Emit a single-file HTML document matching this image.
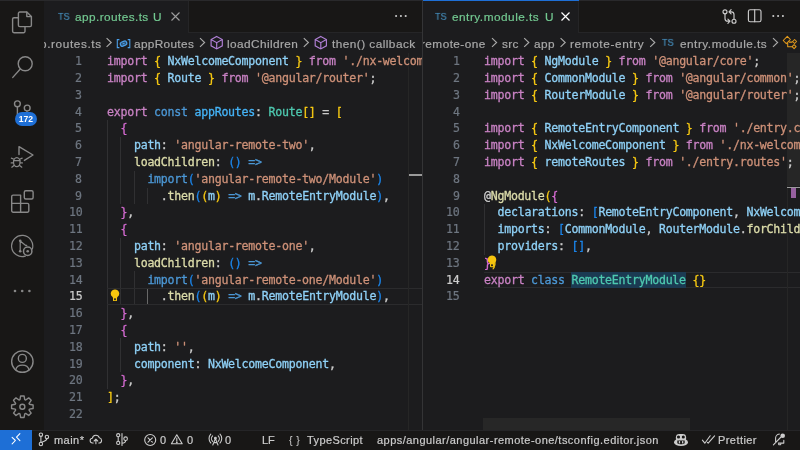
<!DOCTYPE html>
<html><head><meta charset="utf-8"><title>app.routes.ts</title>
<style>
*{box-sizing:border-box;margin:0;padding:0}
html,body{width:800px;height:450px;overflow:hidden;background:#1c1c1e}
body{position:relative;font-family:"Liberation Sans",sans-serif;color:#ccc;-webkit-font-smoothing:antialiased}
.abs{position:absolute}
#act{left:0;top:0;width:44px;height:430px;background:#181716}
#act svg{position:absolute;overflow:visible}
.grp{position:absolute;top:0;height:430px;overflow:hidden;background:#1c1c1e}
.tx,.no,.tab span,.bc span,#status span{will-change:transform}
#g1{left:44px;width:378px}
#g2{left:423px;width:377px}
#sep{left:422px;top:0;width:1px;height:430px;background:#343436}
.tabs{position:absolute;left:0;top:0;right:0;height:33px;background:#181716;border-bottom:1px solid #252527}
.tab{position:absolute;left:0;top:0;height:33px;background:#1c1c1e;border-right:1px solid #252527}
.tab span{position:absolute;white-space:nowrap}
.tl{top:8.75px;font-size:11.8px;line-height:16px;color:#73c991;-webkit-text-stroke:.2px}
.ts{position:absolute;font-size:10.2px;transform:scale(.885,.86);transform-origin:0 0;line-height:12px;color:#4792c2;-webkit-text-stroke:.15px}
.bc{position:absolute;left:0;right:0;top:33px;height:20px;white-space:nowrap;font-size:11.8px;color:#a9a9a9}
.bc span,.bc svg{position:absolute}
.bc span{top:2.6px;line-height:16px;-webkit-text-stroke:.2px}
.bc span.ts{line-height:12px}
.code{position:absolute;left:0;right:0;top:53.2px;bottom:0;font-family:"DejaVu Sans Mono","Liberation Mono",monospace;font-size:11.6px;letter-spacing:-.253px}
.ln{position:relative;height:16.81px;line-height:16.81px}
.no{position:absolute;right:calc(100% - var(--nr));top:0;color:#6e7681;-webkit-text-stroke:.2px}
.act .no{color:#ccc}
.tx{position:absolute;left:var(--cx);top:0;white-space:pre;-webkit-text-stroke:.3px}
.k{color:#c982c4}.b{color:#4c98d6}.v{color:#8fd1f7}.s{color:#ce9178}.f{color:#dcdcaa}.t{color:#4ec9b0}.c{color:#45b4f8}.p{color:#cccccc}
.g1{color:#f7c912}.g2{color:#d56bd2}.g3{color:#1b86ec}
.sel{color:#4ec9b0}
.guide{position:absolute;width:1px;background:#303032}
.ga{background:#686868;width:1.2px}
.clb{position:absolute;height:1px;background:#2b2b2d}
#status{left:0;top:430px;width:800px;height:20px;background:#181716;border-top:1px solid #252527;font-size:11px;color:#ccc}
#status span,#status svg{position:absolute;white-space:nowrap}
#status span{top:.7px;line-height:16px;-webkit-text-stroke:.2px}
#remote{left:0;top:430px;width:32px;height:20px;background:#1e6fd6}
</style></head><body>

<div id="act" class="abs"></div>
<svg class="abs" style="left:0;top:0" width="44" height="430" viewBox="0 0 44 430" fill="none" stroke="#888888" stroke-width="1.4" stroke-linejoin="round" stroke-linecap="round">
<!-- files -->
<path d="M18.400 25.200V13.400a1.400 1.400 0 0 1 1.400-1.400h7l4.600 4.600v8.600a1.400 1.400 0 0 1-1.400 1.400H19.800a1.400 1.400 0 0 1-1.400-1.400z"/>
<path d="M26.800 12.200v4.400h4.400"/>
<path d="M18.200 17.700h-4.200a1.400 1.400 0 0 0-1.400 1.400v12.200a1.400 1.400 0 0 0 1.400 1.400h9.600a1.400 1.400 0 0 0 1.400-1.400v-4.500"/>
<!-- search -->
<circle cx="25.2" cy="63.8" r="7"/>
<path d="M20.3 69L12.8 77.4"/>
<!-- scm -->
<circle cx="17.4" cy="103.8" r="2.9"/>
<circle cx="27.2" cy="108" r="2.9"/>
<path d="M17.4 107v14M27 111.4c0 4-4 5-9.6 6.5"/>
<!-- debug -->
<path d="M19 154.600V146.600L33 155 24.400 160.400"/>
<g stroke-width="1.250"><ellipse cx="16.800" cy="162.100" rx="3.300" ry="4.500"/>
<path d="M13.700 160.600h6.200M13.400 159l-2-.8M20.200 159l2-.8M13.400 162.900h-2.200M20.200 162.900h2.200M14 165.400l-2.200 1.800M19.600 165.400l2.200 1.800"/></g>
<!-- extensions -->
<path d="M20.600 195.100h-7.500a1.400 1.400 0 0 0-1.400 1.400v14.300a1.400 1.400 0 0 0 1.400 1.400h14.300a1.400 1.400 0 0 0 1.400-1.400v-6a1.400 1.400 0 0 0-1.400-1.400h-6.800zM11.700 203.400h8.900M20.600 203.400v8.800"/>
<rect x="24.300" y="190.700" width="8.800" height="8.300" rx="1.500"/>
<!-- gitlens inspect -->
<g stroke-width="1.2"><path d="M25.300 256.150A10.600 10.600 0 1 1 32.350 249"/>
<circle cx="27.700" cy="251.300" r="4.200" stroke-width="1.500"/>
<circle cx="27.700" cy="251.300" r="1.300" fill="#888888" stroke="none"/>
<path d="M20.200 241v10M20.200 241l5.200 4.300h1.400"/>
<circle cx="20.200" cy="240.700" r="1.300" fill="#888888" stroke="none"/><circle cx="20.200" cy="251.300" r="1.300" fill="#888888" stroke="none"/></g>
<!-- more -->
<g fill="#868686" stroke="none"><circle cx="15" cy="291" r="1.3"/><circle cx="22.2" cy="291" r="1.3"/><circle cx="29.4" cy="291" r="1.3"/></g>
<!-- account -->
<circle cx="22.35" cy="361.6" r="10.7"/>
<circle cx="22.35" cy="358.4" r="4"/>
<path d="M15.7 369.800c.8-3.400 3.300-4.700 6.650-4.700s5.850 1.300 6.650 4.700"/>
<!-- gear -->
<path d="M19.96 399.59 L20.61 395.94 L24.09 395.94 L24.74 399.59 L25.69 399.98 L28.72 397.86 L31.19 400.33 L29.07 403.36 L29.46 404.31 L33.11 404.96 L33.11 408.44 L29.46 409.09 L29.07 410.04 L31.19 413.07 L28.72 415.54 L25.69 413.42 L24.74 413.81 L24.09 417.46 L20.61 417.46 L19.96 413.81 L19.01 413.42 L15.98 415.54 L13.51 413.07 L15.63 410.04 L15.24 409.09 L11.59 408.44 L11.59 404.96 L15.24 404.31 L15.63 403.36 L13.51 400.33 L15.98 397.86 L19.01 399.98Z"/>
<circle cx="22.35" cy="406.7" r="2.5"/>
</svg>
<div class="abs" style="left:14.7px;top:111.7px;width:22.5px;height:14.8px;border-radius:7.4px;background:#1e6fd6;color:#fff;font-size:8.6px;font-weight:bold;line-height:14.8px;text-align:center;letter-spacing:0;text-indent:-.6px"><span style="will-change:transform;display:block">172</span></div>

<div id="g1" class="grp" style="--nr:38px;--cx:63px">
  <div class="tabs">
    <div class="tab" style="width:145px">
      <span class="ts" style="left:13.6px;top:11.6px">TS</span>
      <span class="tl" style="left:30.6px;letter-spacing:.42px">app.routes.ts</span>
      <span class="tl" style="left:109.4px">U</span>
      <svg class="abs" style="left:126.5px;top:11.5px" width="9" height="9" viewBox="0.5 0.5 9 9" stroke="#9d9d9d" stroke-width="1.1" fill="none"><path d="M1 1l8 8M9 1l-8 8"/></svg>
    </div>
    <svg class="abs" style="left:348.6px;top:13px" width="16" height="6" viewBox="0 0 16 6" fill="#ccc"><circle cx="3.100" cy="3" r="1.050"/><circle cx="7.900" cy="3" r="1.050"/><circle cx="12.700" cy="3" r="1.050"/></svg>
  </div>
  <div class="bc">
    <span style="left:-4.5px;letter-spacing:.6px">p.routes.ts</span>
    <span style="left:90px;letter-spacing:.34px">appRoutes</span>
    <span style="left:183.2px;letter-spacing:.42px">loadChildren</span>
    <span style="left:287.6px;letter-spacing:.46px">then() callback</span>
    <svg class="abs" style="left:0;top:0" width="378" height="20" viewBox="44 33 378 20" fill="none" stroke="#a9a9a9" stroke-width="1.15">
      <path d="M106.6 38.1l4.6 4.4l-4.6 4.4"/><path d="M200 38.1l4.6 4.4l-4.6 4.4"/><path d="M303.8 38.1l4.6 4.4l-4.6 4.4"/>
      <g stroke="#4a9ee8" stroke-width="1.100"><path d="M119.400 39.600h-2.100v8h2.100M127.700 39.600h2.100v8h-2.100"/><g transform="rotate(-22 123.550 43.600)"><rect x="120.300" y="41.500" width="6.500" height="4.200" rx="1.700" stroke-width="1.300" fill="#4a9ee8" fill-opacity=".4"/><path d="M122.500 43.600h2.100" stroke-width="1.200"/></g></g>
      <path stroke="#b180d7" d="M216.7 36.5l5.6 3.1v6.2l-5.6 3.1l-5.6-3.1v-6.2zM211.1 39.6l5.6 3.1l5.6-3.1M216.7 42.7v6.2"/><path stroke="#b180d7" d="M320.8 36.5l5.6 3.1v6.2l-5.6 3.1l-5.6-3.1v-6.2zM315.2 39.6l5.6 3.1l5.6-3.1M320.8 42.7v6.2"/>
    </svg>
  </div>
  <div class="guide" style="left:62.6px;top:120.48px;height:268.32px"></div>
<div class="guide" style="left:76.0px;top:137.25px;height:67.08px"></div>
<div class="guide" style="left:76.0px;top:237.87px;height:67.08px"></div>
<div class="guide" style="left:76.0px;top:338.49px;height:33.54px"></div>
<div class="guide" style="left:89.5px;top:170.79px;height:33.54px"></div>
<div class="guide" style="left:89.5px;top:271.41px;height:33.54px"></div>
<div class="guide" style="left:102.9px;top:187.56px;height:16.77px"></div>
<div class="guide ga" style="left:102.7px;top:288.18px;height:16.77px"></div>
<div class="clb" style="left:63px;width:315px;top:288.38px"></div>
<div class="clb" style="left:63px;width:315px;top:304.15px"></div>
<svg class="abs" style="left:65.6px;top:288.7px" width="10" height="12.8" viewBox="0 0 11 14"><path fill="#f6c50e" d="M5.500 .4a4.600 4.600 0 0 0-2.900 8.200c.5.500.700 1 .700 1.600v2.200a1 1 0 0 0 1 1h2.400a1 1 0 0 0 1-1v-2.200c0-.6.200-1.100.700-1.600a4.600 4.600 0 0 0-2.900-8.200z"/><rect x="4.500" y="10" width="2" height="2.200" rx=".6" fill="#1c1c1e"/></svg>
<div class="abs" style="left:364px;top:53px;width:14px;height:377px;border-left:1px solid #262626"></div>
<div class="abs" style="left:365px;top:174px;width:13px;height:1.5px;background:#9a9a9a"></div>
  <div class="code">
<div class="ln"><span class="no">1</span><span class="tx"><span class="k">import</span><span class="p"> </span><span class="g1">{</span><span class="v"> NxWelcomeComponent </span><span class="g1">}</span><span class="k"> from </span><span class="s">'./nx-welcome.component'</span><span class="p">;</span></span></div>
<div class="ln"><span class="no">2</span><span class="tx"><span class="k">import</span><span class="p"> </span><span class="g1">{</span><span class="v"> Route </span><span class="g1">}</span><span class="k"> from </span><span class="s">'@angular/router'</span><span class="p">;</span></span></div>
<div class="ln"><span class="no">3</span><span class="tx"></span></div>
<div class="ln"><span class="no">4</span><span class="tx"><span class="k">export</span><span class="b"> const </span><span class="c">appRoutes</span><span class="p">: </span><span class="t">Route</span><span class="g1">[]</span><span class="p"> = </span><span class="g1">[</span></span></div>
<div class="ln"><span class="no">5</span><span class="tx"><span class="p">  </span><span class="g2">{</span></span></div>
<div class="ln"><span class="no">6</span><span class="tx"><span class="p">    </span><span class="v">path</span><span class="p">: </span><span class="s">'angular-remote-two'</span><span class="p">,</span></span></div>
<div class="ln"><span class="no">7</span><span class="tx"><span class="p">    </span><span class="f">loadChildren</span><span class="p">: </span><span class="g3">()</span><span class="b"> =&gt;</span></span></div>
<div class="ln"><span class="no">8</span><span class="tx"><span class="p">      </span><span class="b">import</span><span class="g3">(</span><span class="s">'angular-remote-two/Module'</span><span class="g3">)</span></span></div>
<div class="ln"><span class="no">9</span><span class="tx"><span class="p">        .</span><span class="f">then</span><span class="g3">(</span><span class="g1">(</span><span class="v">m</span><span class="g1">)</span><span class="b"> =&gt; </span><span class="v">m</span><span class="p">.</span><span class="v">RemoteEntryModule</span><span class="g3">)</span><span class="p">,</span></span></div>
<div class="ln"><span class="no">10</span><span class="tx"><span class="p">  </span><span class="g2">}</span><span class="p">,</span></span></div>
<div class="ln"><span class="no">11</span><span class="tx"><span class="p">  </span><span class="g2">{</span></span></div>
<div class="ln"><span class="no">12</span><span class="tx"><span class="p">    </span><span class="v">path</span><span class="p">: </span><span class="s">'angular-remote-one'</span><span class="p">,</span></span></div>
<div class="ln"><span class="no">13</span><span class="tx"><span class="p">    </span><span class="f">loadChildren</span><span class="p">: </span><span class="g3">()</span><span class="b"> =&gt;</span></span></div>
<div class="ln"><span class="no">14</span><span class="tx"><span class="p">      </span><span class="b">import</span><span class="g3">(</span><span class="s">'angular-remote-one/Module'</span><span class="g3">)</span></span></div>
<div class="ln act"><span class="no">15</span><span class="tx"><span class="p">        .</span><span class="f">then</span><span class="g3">(</span><span class="g1">(</span><span class="v">m</span><span class="g1">)</span><span class="b"> =&gt; </span><span class="v">m</span><span class="p">.</span><span class="v">RemoteEntryModule</span><span class="g3">)</span><span class="p">,</span></span></div>
<div class="ln"><span class="no">16</span><span class="tx"><span class="p">  </span><span class="g2">}</span><span class="p">,</span></span></div>
<div class="ln"><span class="no">17</span><span class="tx"><span class="p">  </span><span class="g2">{</span></span></div>
<div class="ln"><span class="no">18</span><span class="tx"><span class="p">    </span><span class="v">path</span><span class="p">: </span><span class="s">''</span><span class="p">,</span></span></div>
<div class="ln"><span class="no">19</span><span class="tx"><span class="p">    </span><span class="v">component</span><span class="p">: </span><span class="v">NxWelcomeComponent</span><span class="p">,</span></span></div>
<div class="ln"><span class="no">20</span><span class="tx"><span class="p">  </span><span class="g2">}</span><span class="p">,</span></span></div>
<div class="ln"><span class="no">21</span><span class="tx"><span class="g1">]</span><span class="p">;</span></span></div>
<div class="ln"><span class="no">22</span><span class="tx"></span></div>
  </div>
</div>

<div id="sep" class="abs"></div>

<div id="g2" class="grp" style="--nr:36.5px;--cx:60.6px">
  <div class="tabs">
    <div class="tab" style="width:156px">
      <div class="abs" style="left:0;top:0;width:156px;height:1.4px;background:#1e6fd6"></div>
      <span class="ts" style="left:11.6px;top:11.6px">TS</span>
      <span class="tl" style="left:28.6px;letter-spacing:.5px">entry.module.ts</span>
      <span class="tl" style="left:121.6px">U</span>
      <svg class="abs" style="left:137.7px;top:11.7px" width="9" height="9" viewBox="0.5 0.5 9 9" stroke="#fff" stroke-width="1.2" fill="none"><path d="M1 1l8 8M9 1l-8 8"/></svg>
    </div>
    <svg class="abs" style="left:297px;top:6px" width="70" height="22" viewBox="720 6 70 22" fill="none" stroke="#ccc" stroke-width="1.15" stroke-linecap="round" stroke-linejoin="round">
      <circle cx="725" cy="11.800" r="2"/><circle cx="734" cy="21.200" r="2"/>
      <path d="M725 13.800v4.600a2.800 2.800 0 0 0 2.800 2.800h2M727.900 19.100l2.100 2.100l-2.100 2.100M734 19.200v-4.600a2.800 2.800 0 0 0-2.800-2.800h-2M731.100 9.700l-2.100 2.100l2.100 2.100"/>
      <rect x="748.400" y="9.700" width="12.600" height="12" rx="1.800"/><path d="M754.700 9.700v12"/>
      <g fill="#ccc" stroke="none"><circle cx="773.300" cy="16" r="1.050"/><circle cx="778.100" cy="16" r="1.050"/><circle cx="782.900" cy="16" r="1.050"/></g>
    </svg>
  </div>
  <div class="bc">
    <span style="left:-2.4px;letter-spacing:.44px">remote-one</span>
    <span style="left:78.6px;letter-spacing:.38px">src</span>
    <span style="left:110.6px;letter-spacing:.4px">app</span>
    <span style="left:146.8px;letter-spacing:.62px">remote-entry</span>
    <span class="ts" style="left:239.4px;top:5px">TS</span>
    <span style="left:256.6px;letter-spacing:.5px">entry.module.ts</span>
    <svg class="abs" style="left:0;top:0" width="377" height="20" viewBox="423 33 377 20" fill="none" stroke="#a9a9a9" stroke-width="1.15">
      <path d="M492 38.1l4.6 4.4l-4.6 4.4"/><path d="M524.2 38.1l4.6 4.4l-4.6 4.4"/><path d="M560.6 38.1l4.6 4.4l-4.6 4.4"/><path d="M650.2 38.1l4.6 4.4l-4.6 4.4"/><path d="M773 38.1l4.6 4.4l-4.6 4.4"/>
      <g stroke="#e39b1c" stroke-width="1.050" stroke-linejoin="round"><path d="M787.300 36.400l3.100 3.100l-4.100 4.100l-3.100-3.100zM794.600 39.500l2 2l-2 2l-2-2zM794.100 44.600l2 2l-2 2l-2-2zM788.800 42.100h3.600M787.700 43v3.800h4.200"/></g>
    </svg>
  </div>
  <div class="guide" style="left:61.0px;top:204.33px;height:50.31px"></div>
<div class="clb" style="left:60.5px;width:316.5px;top:271.61px"></div>
<div class="clb" style="left:60.5px;width:316.5px;top:287.38px"></div>
<div class="abs" style="left:148.4px;top:272px;width:114.6px;height:16px;background:#1b3a52"></div>
<div class="abs" style="left:364px;top:53px;width:13px;height:377px;border-left:1px solid #262626"></div>
<div class="abs" style="left:364px;top:53px;width:13px;height:133px;background:#262626"></div>
<div class="abs" style="left:364px;top:186.8px;width:13px;height:1.5px;background:#9a9a9a"></div>
<div class="abs" style="left:368px;top:188.2px;width:5px;height:10px;background:#96609f"></div>
<div class="abs" style="left:60.4px;top:418.4px;width:206.2px;height:11.6px;background:#272727"></div>
  <div class="code">
<div class="ln"><span class="no">1</span><span class="tx"><span class="k">import</span><span class="p"> </span><span class="g1">{</span><span class="v"> NgModule </span><span class="g1">}</span><span class="k"> from </span><span class="s">'@angular/core'</span><span class="p">;</span></span></div>
<div class="ln"><span class="no">2</span><span class="tx"><span class="k">import</span><span class="p"> </span><span class="g1">{</span><span class="v"> CommonModule </span><span class="g1">}</span><span class="k"> from </span><span class="s">'@angular/common'</span><span class="p">;</span></span></div>
<div class="ln"><span class="no">3</span><span class="tx"><span class="k">import</span><span class="p"> </span><span class="g1">{</span><span class="v"> RouterModule </span><span class="g1">}</span><span class="k"> from </span><span class="s">'@angular/router'</span><span class="p">;</span></span></div>
<div class="ln"><span class="no">4</span><span class="tx"></span></div>
<div class="ln"><span class="no">5</span><span class="tx"><span class="k">import</span><span class="p"> </span><span class="g1">{</span><span class="v"> RemoteEntryComponent </span><span class="g1">}</span><span class="k"> from </span><span class="s">'./entry.component'</span><span class="p">;</span></span></div>
<div class="ln"><span class="no">6</span><span class="tx"><span class="k">import</span><span class="p"> </span><span class="g1">{</span><span class="v"> NxWelcomeComponent </span><span class="g1">}</span><span class="k"> from </span><span class="s">'./nx-welcome.component'</span><span class="p">;</span></span></div>
<div class="ln"><span class="no">7</span><span class="tx"><span class="k">import</span><span class="p"> </span><span class="g1">{</span><span class="v"> remoteRoutes </span><span class="g1">}</span><span class="k"> from </span><span class="s">'./entry.routes'</span><span class="p">;</span></span></div>
<div class="ln"><span class="no">8</span><span class="tx"></span></div>
<div class="ln"><span class="no">9</span><span class="tx"><span class="p">@</span><span class="f">NgModule</span><span class="g1">(</span><span class="g2">{</span></span></div>
<div class="ln"><span class="no">10</span><span class="tx"><span class="p">  </span><span class="v">declarations</span><span class="p">: </span><span class="g3">[</span><span class="v">RemoteEntryComponent</span><span class="p">, </span><span class="v">NxWelcomeComponent</span><span class="g3">]</span><span class="p">,</span></span></div>
<div class="ln"><span class="no">11</span><span class="tx"><span class="p">  </span><span class="v">imports</span><span class="p">: </span><span class="g3">[</span><span class="v">CommonModule</span><span class="p">, </span><span class="v">RouterModule</span><span class="p">.</span><span class="f">forChild</span><span class="g1">(</span><span class="v">remoteRoutes</span><span class="g1">)</span><span class="g3">]</span><span class="p">,</span></span></div>
<div class="ln"><span class="no">12</span><span class="tx"><span class="p">  </span><span class="v">providers</span><span class="p">: </span><span class="g3">[]</span><span class="p">,</span></span></div>
<div class="ln"><span class="no">13</span><span class="tx"><span class="g2">}</span><span class="g1">)</span></span></div>
<div class="ln act"><span class="no">14</span><span class="tx"><span class="k">export</span><span class="b"> class </span><span class="sel">RemoteEntryModule</span><span class="p"> </span><span class="g1">{}</span></span></div>
<div class="ln"><span class="no">15</span><span class="tx"></span></div>
  </div>
<svg class="abs" style="left:63.7px;top:255.2px" width="10" height="12.8" viewBox="0 0 11 14"><path fill="#f6c50e" d="M5.500 .4a4.600 4.600 0 0 0-2.900 8.200c.5.500.700 1 .700 1.600v2.200a1 1 0 0 0 1 1h2.400a1 1 0 0 0 1-1v-2.200c0-.6.200-1.100.700-1.600a4.600 4.600 0 0 0-2.900-8.200z"/><rect x="4.500" y="10" width="2" height="2.200" rx=".6" fill="#1c1c1e"/></svg>
</div>

<div class="abs" style="left:0;top:0;width:422px;height:1px;background:#29292b"></div>
<div class="abs" style="left:579px;top:0;width:221px;height:1px;background:#29292b"></div>
<div id="status" class="abs">
  <span style="left:53.6px;letter-spacing:.45px">main*</span>
  <span style="left:160.4px">0</span>
  <span style="left:186.6px">0</span>
  <span style="left:225px">0</span>
  <span style="left:262px;letter-spacing:-.2px">LF</span>
  <span style="left:307px;letter-spacing:.4px">TypeScript</span>
  <span style="left:377px;letter-spacing:.47px">apps/angular/angular-remote-one/tsconfig.editor.json</span>
  <span style="left:718px;letter-spacing:.43px">Prettier</span>
  <span style="left:289.2px;letter-spacing:3.6px;font-size:10.6px;-webkit-text-stroke:0">{}</span>
</div>
<div id="remote" class="abs"></div>
<svg class="abs" style="left:0;top:430px" width="800" height="20" viewBox="0 430 800 20" fill="none" stroke="#ccc" stroke-width="1.1" stroke-linecap="round" stroke-linejoin="round">
  <!-- remote -->
  <path stroke="#fff" stroke-width="1.050" d="M12.100 437.300l3.300 3.200l-3.300 3.400M19.900 433.600l-3.400 3.600l3.400 3.400"/>
  <!-- branch -->
  <circle cx="40.900" cy="434.700" r="1.700"/><circle cx="40.900" cy="444" r="1.700"/><circle cx="46.900" cy="436.900" r="1.700"/>
  <path d="M40.900 436.400v5.900M46.900 438.600c0 2.400-3.200 2.600-5.400 3.900"/>
  <!-- cloud upload -->
  <path d="M93.200 443h-.5a2.400 2.400 0 0 1-.3-4.800a3.500 3.500 0 0 1 6.800-.5a2.700 2.700 0 0 1 .3 5.300h-.7M95.900 443.800v-4.400M94.100 441l1.800-1.800l1.800 1.800"/>
  <!-- graph -->
  <circle cx="118.2" cy="435.2" r="1.6"/><circle cx="118.2" cy="442.9" r="1.6"/><circle cx="125.6" cy="438.7" r="1.8"/>
  <path d="M118.2 436.8v4.5M122 433.6v11.8M125.6 440.5c0 1.800-1.200 2.600-3.600 2.600"/>
  <!-- error -->
  <circle cx="150.2" cy="440" r="5.5"/><path d="M148 437.8l4.4 4.4M152.4 437.8l-4.4 4.4"/>
  <!-- warning -->
  <path d="M176.8 434.8l5.4 9h-10.8zM176.8 438v3"/><circle cx="176.8" cy="442.4" r=".4" fill="#ccc"/>
  <!-- radio tower -->
  <path d="M215.4 438.6l-2.6 6.4M215.4 438.6l2.6 6.4M213.8 442.6h3.2M212.6 441.4a4 4 0 0 1 0-5.6M218.2 441.4a4 4 0 0 0 0-5.6M210.8 443a6.4 6.4 0 0 1 0-8.8M220 443a6.4 6.4 0 0 0 0-8.8"/><circle cx="215.4" cy="438.2" r=".9"/>
  <!-- copilot -->
  <g stroke="none"><rect x="675.9" y="433.9" width="10.2" height="8" rx="3.4" fill="#ccc"/><ellipse cx="681" cy="442.2" rx="7" ry="3.9" fill="#ccc"/>
  <circle cx="678.5" cy="437" r="1.55" fill="#181716"/><circle cx="683.3" cy="437" r="1.55" fill="#181716"/>
  <path d="M677.3 440.500h7.400v2.700c-1 .800-2.300 1.100-3.700 1.100s-2.700-.3-3.700-1.100z" fill="#181716"/>
  <rect x="678.8" y="441.100" width="1.300" height="2.300" fill="#ccc"/><rect x="682" y="441.100" width="1.300" height="2.300" fill="#ccc"/></g>
  <!-- check all -->
  <path d="M702.400 440.200l2.400 3l5.400-7.400M707.400 442.400l.8 .8l6.400-7.400"/>
  <!-- bell slash dot -->
  <path d="M775.600 441.600v-2.800a4.400 4.400 0 0 1 3.800-4.800M783.800 440.400v2.700h-5.400M778.600 444.200a1.200 1 0 0 0 2.200 0M773.400 444.800l7.600-7.800"/>
  <circle cx="782.700" cy="435.800" r="2.300" fill="#ccc" stroke="none"/>
</svg>
</body></html>
